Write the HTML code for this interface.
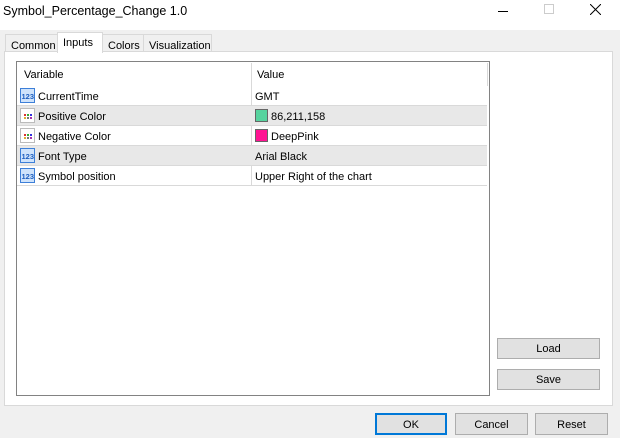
<!DOCTYPE html><html><head><style>
*{margin:0;padding:0;box-sizing:border-box}
body{width:620px;height:438px;background:#f0f0f0;font-family:"Liberation Sans",sans-serif;font-size:11px;color:#000;position:relative;overflow:hidden}
.a{position:absolute}
.title{left:0;top:0;width:620px;height:30px;background:#fff}
.tab{position:absolute;top:34px;height:18px;border:1px solid #d9d9d9;border-bottom:none;background:#f0f0f0;padding:5px 5px 0;font-size:11px}
.btn{position:absolute;background:#e1e1e1;border:1px solid #adadad;text-align:center;font-size:11px}
.row{position:absolute;left:17px;width:470px;height:20px;border-bottom:1px solid #d9d9d9}
.row span{position:absolute;top:5px}
.ic{position:absolute;left:3px;top:2px;width:15px;height:15px}
</style></head><body>
<div class="a title"><div class="a" style="left:3px;top:4px;font-size:12.5px">Symbol_Percentage_Change 1.0</div>
<div class="a" style="left:498px;top:11px;width:10px;height:1px;background:#000"></div>
<div class="a" style="left:544px;top:4px;width:10px;height:10px;border:1px solid #ccc"></div>
<svg class="a" style="left:590px;top:4px" width="11" height="11"><path d="M0 0L11 11M11 0L0 11" stroke="#000" stroke-width="1"/></svg></div>
<div class="tab" style="left:5px;width:53px">Common</div>
<div class="tab" style="left:102px;width:42px">Colors</div>
<div class="tab" style="left:143px;width:69px">Visualization</div>
<div class="a" style="left:4px;top:51px;width:609px;height:355px;background:#fff;border:1px solid #d9d9d9"></div>
<div class="tab" style="left:57px;top:32px;width:46px;height:21px;background:#fff;border-bottom:none;padding-top:4px">Inputs</div>
<div class="a" style="left:16px;top:61px;width:474px;height:335px;border:1px solid #828282;background:#fff"></div>
<div class="a" style="left:251px;top:63px;width:1px;height:123px;background:#d9d9d9"></div>
<div class="a" style="left:487px;top:63px;width:1px;height:23px;background:#d9d9d9"></div>
<div class="a" style="left:24px;top:69px">Variable</div><div class="a" style="left:257px;top:69px">Value</div>
<div class="row" style="top:86px"><svg class="ic" viewBox="0 0 15 15"><rect x=".5" y=".5" width="14" height="14" fill="#cfe3fb" stroke="#3d7fd8"/><text x="1.5" y="11" font-size="7.5" fill="#1f5fbf" font-family="Liberation Sans" font-weight="bold">123</text></svg><span style="left:21px">CurrentTime</span><span style="left:238px">GMT</span></div>
<div class="row" style="top:106px;background:#e8e8e8"><svg class="ic" viewBox="0 0 15 15"><rect x=".5" y=".5" width="14" height="14" fill="#fff" stroke="#bbb"/><rect x="4" y="6" width="2" height="2" fill="#d33"/><rect x="7" y="6" width="2" height="2" fill="#3a3"/><rect x="10" y="6" width="2" height="2" fill="#33d"/><rect x="4" y="9" width="2" height="2" fill="#da3"/><rect x="7" y="9" width="2" height="2" fill="#777"/><rect x="10" y="9" width="2" height="2" fill="#a3a"/></svg><span style="left:21px">Positive Color</span><div class="a" style="left:238px;top:3px;width:13px;height:13px;background:#56d39e;border:1px solid #666"></div><span style="left:254px">86,211,158</span></div>
<div class="row" style="top:126px"><svg class="ic" viewBox="0 0 15 15"><rect x=".5" y=".5" width="14" height="14" fill="#fff" stroke="#bbb"/><rect x="4" y="6" width="2" height="2" fill="#d33"/><rect x="7" y="6" width="2" height="2" fill="#3a3"/><rect x="10" y="6" width="2" height="2" fill="#33d"/><rect x="4" y="9" width="2" height="2" fill="#da3"/><rect x="7" y="9" width="2" height="2" fill="#777"/><rect x="10" y="9" width="2" height="2" fill="#a3a"/></svg><span style="left:21px">Negative Color</span><div class="a" style="left:238px;top:3px;width:13px;height:13px;background:#ff1493;border:1px solid #666"></div><span style="left:254px">DeepPink</span></div>
<div class="row" style="top:146px;background:#e8e8e8"><svg class="ic" viewBox="0 0 15 15"><rect x=".5" y=".5" width="14" height="14" fill="#cfe3fb" stroke="#3d7fd8"/><text x="1.5" y="11" font-size="7.5" fill="#1f5fbf" font-family="Liberation Sans" font-weight="bold">123</text></svg><span style="left:21px">Font Type</span><span style="left:238px">Arial Black</span></div>
<div class="row" style="top:166px"><svg class="ic" viewBox="0 0 15 15"><rect x=".5" y=".5" width="14" height="14" fill="#cfe3fb" stroke="#3d7fd8"/><text x="1.5" y="11" font-size="7.5" fill="#1f5fbf" font-family="Liberation Sans" font-weight="bold">123</text></svg><span style="left:21px">Symbol position</span><span style="left:238px">Upper Right of the chart</span></div>
<div class="btn" style="left:497px;top:338px;width:103px;height:21px;padding-top:4px">Load</div>
<div class="btn" style="left:497px;top:369px;width:103px;height:21px;padding-top:4px">Save</div>
<div class="btn" style="left:375px;top:413px;width:72px;height:22px;padding-top:4px;border:2px solid #0078d7">OK</div>
<div class="btn" style="left:455px;top:413px;width:73px;height:22px;padding-top:5px">Cancel</div>
<div class="btn" style="left:535px;top:413px;width:73px;height:22px;padding-top:5px">Reset</div>
</body></html>
